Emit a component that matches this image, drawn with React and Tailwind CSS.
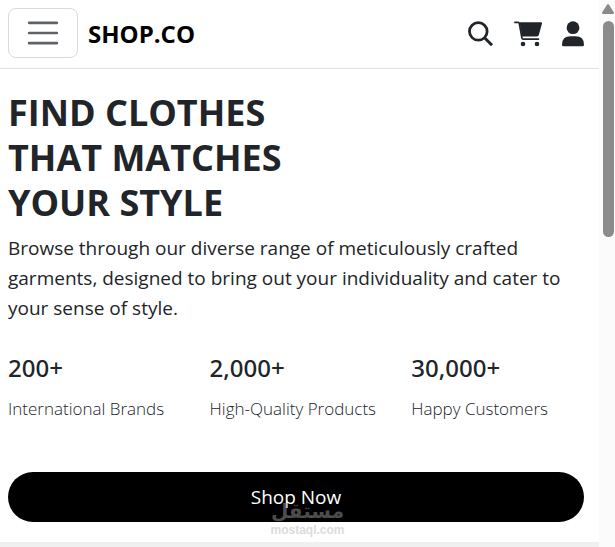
const stats = [
  { value: "200+", label: "International Brands" },
  { value: "2,000+", label: "High-Quality Products" },
  { value: "30,000+", label: "Happy Customers" },
];

function SearchIcon() {
  return (
    <svg viewBox="0 0 26 26" className="size-[26px]" fill="none" stroke="currentColor">
      <circle cx="10.3" cy="10.4" r="8.8" strokeWidth="2.8" />
      <path d="M16.8 17L24 24.2" strokeWidth="3" />
    </svg>
  );
}

function CartIcon() {
  return (
    <svg viewBox="0 0 28 26" className="h-[26px] w-7" fill="currentColor">
      <path d="M5.5 1.3h21.7q1.1 0 .8 1.2l-3.2 11.5q-.4 1.4-1.8 1.4H8.2Z" />
      <path d="M.9 1.3h3.2q1 0 1.2 1l2.6 14.6q.2 1.2 1.3 1.2H24.5" fill="none" stroke="currentColor" strokeWidth="1.7" strokeLinecap="round" strokeLinejoin="round" />
      <circle cx="9" cy="23" r="2.3" />
      <circle cx="23" cy="23" r="2.3" />
    </svg>
  );
}

function UserIcon() {
  return (
    <svg viewBox="0 0 22 26" className="h-[26px] w-[22px]" fill="currentColor">
      <circle cx="11" cy="6.7" r="6.4" />
      <path d="M0 23.7Q0 15.3 8.5 15.3H13.5Q22 15.3 22 23.7Q22 25.3 20.5 25.3H1.5Q0 25.3 0 23.7Z" />
    </svg>
  );
}

function Header() {
  return (
    <header className="flex h-[69px] items-center border-b border-[#dee2e6] px-2 pb-0.5">
      <button
        type="button"
        aria-label="Toggle navigation"
        className="flex h-[50px] w-[70px] items-center justify-center rounded-lg border border-[#d9dadb]"
      >
        <svg viewBox="0 0 30 30" className="size-[38px]" fill="none" stroke="#5f6367" strokeWidth="2" strokeLinecap="round">
          <path d="M4 7h22M4 15h22M4 23h22" />
        </svg>
      </button>
      <a href="#" className="ml-2.5 pt-0.5 text-2xl font-bold text-black">SHOP.CO</a>
      <nav className="ml-auto flex items-center gap-5 pt-0.5 pr-[7px]">
        <a href="#search" aria-label="Search"><SearchIcon /></a>
        <a href="#cart" aria-label="Cart"><CartIcon /></a>
        <a href="#account" aria-label="Account"><UserIcon /></a>
      </nav>
    </header>
  );
}

function Hero() {
  return (
    <main className="pt-[21px] pr-[15px] pl-2">
      <h1 className="text-[36px] leading-[45px] font-bold">
        FIND CLOTHES<br />THAT MATCHES<br />YOUR STYLE
      </h1>
      <p className="mt-2 text-[19px] leading-[30px]">
        Browse through our diverse range of meticulously crafted garments, designed to bring out your individuality and cater to your sense of style.
      </p>
      <div className="mt-[30px] grid grid-cols-[35%_35%_30%]">
        {stats.map((stat) => (
          <section key={stat.label} className="min-w-0">
            <h2 className="font-['Noto_Sans',sans-serif] text-2xl leading-[30px] font-medium">{stat.value}</h2>
            <p className="mt-3 text-[17px] leading-7 font-light whitespace-nowrap">{stat.label}</p>
          </section>
        ))}
      </div>
      <div className="relative mt-[49px]">
        <button type="button" className="h-[50px] w-full rounded-full bg-black text-[19px] text-white">
          Shop Now
        </button>
        <div className="absolute top-[26px] left-[262px] w-[75px] text-center font-['DejaVu_Sans'] font-bold text-[#808080]/60">
          <div className="text-xl leading-[26px]" lang="ar">مستقل</div>
          <div className="font-['Liberation_Sans'] text-xs leading-3 text-[#dcdcdc]">mostaql.com</div>
        </div>
      </div>
    </main>
  );
}

function Scrollbar() {
  return (
    <div aria-hidden="true" className="flex w-4 shrink-0 flex-col items-center bg-[#fbfbfb] pt-1 pl-0.5">
      <svg viewBox="0 0 12 10" className="h-2.5 w-3" fill="#8b8b8b">
        <path d="M5 .8Q6-.6 7 .8L11.7 8Q12.4 10 11 10H1Q-.4 10 .3 8Z" />
      </svg>
      <div className="mt-[7px] h-[216px] w-[11px] rounded-full bg-[#8b8b8b]" />
    </div>
  );
}

export default function App() {
  return (
    <div className="flex h-screen overflow-hidden bg-white font-['Open_Sans','Noto_Sans',sans-serif] text-[#212529]">
      <div className="min-w-0 flex-1 overflow-hidden">
        <Header />
        <Hero />
        <div className="mt-5 h-24 bg-[#f0f0f0]" />
      </div>
      <Scrollbar />
    </div>
  );
}
